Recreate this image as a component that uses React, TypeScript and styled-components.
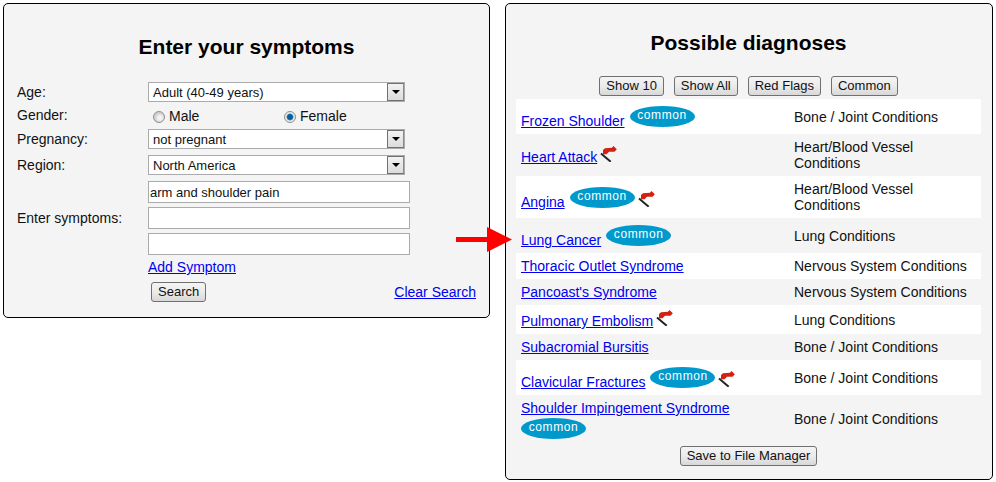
import React from 'react'
import styled, { createGlobalStyle } from 'styled-components'

const GlobalStyle = createGlobalStyle`
  html, body {
    margin: 0;
    background: #fff;
    color: #111;
    font-family: "Liberation Sans", Arial, sans-serif;
    font-size: 14px;
  }
`

const Page = styled.div`
  position: relative;
  width: 996px;
  height: 482px;
  box-sizing: border-box;
  padding: 3px;
  display: flex;
  align-items: flex-start;
  gap: 15px;
`

const Panel = styled.section<{ $width: number; $height: number }>`
  width: ${(p) => p.$width}px;
  height: ${(p) => p.$height}px;
  box-sizing: border-box;
  background: #f4f4f4;
  border: 1px solid #000;
  border-radius: 5px;
`

const SymptomPanel = styled(Panel)`
  padding: 31px 13px 0;
`

const DiagnosisPanel = styled(Panel)`
  padding: 27px 11px 0 10px;
`

const Title = styled.h1`
  margin: 0;
  font-size: 21px;
  line-height: 23px;
  font-weight: bold;
  text-align: center;
  color: #000;
`

const Form = styled.form`
  margin-top: 24px;
  display: grid;
  grid-template-columns: 131px 328px;
  row-gap: 6px;
  align-items: center;
`

const Label = styled.label`
  line-height: 15px;
`

const FakeSelect = styled.div`
  width: 257px;
  height: 20px;
  box-sizing: border-box;
  display: flex;
  align-items: center;
  justify-content: space-between;
  background: #fff;
  border: 1px solid #ababab;
  padding-left: 4px;
  font-size: 13px;
`

const SelectButton = styled.span`
  width: 17px;
  height: 18px;
  box-sizing: border-box;
  display: flex;
  align-items: center;
  justify-content: center;
  background: linear-gradient(#f2f2f2, #dcdcdc);
  border: 1px solid #707070;
  border-right-color: #8a8a8a;

  &::after {
    content: '';
    border-left: 4px solid transparent;
    border-right: 4px solid transparent;
    border-top: 4px solid #000;
  }
`

const RadioRow = styled.div`
  height: 15px;
  display: grid;
  grid-template-columns: 131px 1fr;
  padding-left: 5px;
  margin: 1px 0 -1px;
`

const RadioOption = styled.span`
  display: flex;
  align-items: center;
  gap: 4px;
  line-height: 15px;
`

const RadioDot = styled.span<{ $checked?: boolean }>`
  width: 12px;
  height: 12px;
  box-sizing: border-box;
  border-radius: 50%;
  border: 1px solid #8e8f8f;
  background: ${(p) =>
    p.$checked
      ? 'radial-gradient(circle, #0b5e9c 0 2.4px, #4a9ad0 3.2px, #e6e6e6 3.8px, #f4f4f4 100%)'
      : 'radial-gradient(circle at 60% 60%, #f2f2f2 0 2px, #d0d0d0 5px)'};
`

const SymptomInputs = styled.div`
  display: flex;
  flex-direction: column;
  gap: 4px;
`

const TextInput = styled.input`
  width: 262px;
  height: 22px;
  box-sizing: border-box;
  border: 1px solid #ababab;
  background: #fff;
  padding: 0 1px;
  font-family: inherit;
  font-size: 13px;
  color: #111;
  outline: none;
`

const FormLink = styled.a`
  color: #0000ee;
  text-decoration: underline;
  line-height: 16px;
`

const AddLink = styled(FormLink)`
  grid-column: 2;
  justify-self: start;
  margin-top: -2px;
`

const FormActions = styled.div`
  grid-column: 2;
  display: flex;
  align-items: center;
  justify-content: space-between;
  padding-left: 3px;
  margin-top: 1px;
`

const Button = styled.button`
  height: 20px;
  box-sizing: border-box;
  padding: 0 6px;
  border: 1px solid #707070;
  border-radius: 3px;
  background: linear-gradient(#f4f4f4 0, #ebebeb 50%, #d8d8d8 100%);
  font-family: inherit;
  font-size: 13px;
  line-height: 16px;
  color: #111;
`

const ButtonBar = styled.div`
  margin-top: 22px;
  margin-bottom: 3px;
  display: flex;
  justify-content: center;
  gap: 10px;
`

const SaveBar = styled.div`
  margin-top: 4px;
  display: flex;
  justify-content: center;
`

const Row = styled.div<{ $shaded: boolean }>`
  display: grid;
  grid-template-columns: 273px 1fr;
  align-items: center;
  padding: 5px 0 5px 5px;
  background: ${(p) => (p.$shaded ? '#f4f4f4' : '#fff')};
  line-height: 16px;
`

const NameCell = styled.div`
  width: 268px;
`

const Pill = styled.span`
  display: inline-block;
  width: 65px;
  height: 21px;
  margin: 2px 0 0 5px;
  border-radius: 50%;
  background: #0099cc;
  color: #fff;
  font-size: 12px;
  line-height: 19px;
  letter-spacing: 0.6px;
  text-align: center;
  vertical-align: 7px;
`

const WrappedPill = styled(Pill)`
  margin: 2px 0 -2px;
  vertical-align: -2px;
`

const FlagIcon = styled.svg`
  width: 19px;
  height: 16px;
  margin-left: 3px;
  vertical-align: 0;
`

const Arrow = styled.svg`
  position: absolute;
  left: 456px;
  top: 227px;
  width: 56px;
  height: 25px;
`

const Flag = () => (
  <FlagIcon viewBox="0 0 19 16">
    <path d="M1 7.5 L10.7 15.7" stroke="#222" strokeWidth="2" fill="none" />
    <path d="M3 4 L5 2.3 L12 1.8 L13.5 0 L16.8 3.2 L14.5 5.7 L9 5.7 L6.5 8.3 L3 8.3 Z" fill="#d3200f" />
  </FlagIcon>
)

type Diagnosis = {
  name: string
  category: string
  common?: boolean
  flag?: boolean
  wrap?: boolean
}

const diagnoses: Diagnosis[] = [
  { name: 'Frozen Shoulder', category: 'Bone / Joint Conditions', common: true },
  { name: 'Heart Attack', category: 'Heart/Blood Vessel Conditions', flag: true },
  { name: 'Angina', category: 'Heart/Blood Vessel Conditions', common: true, flag: true },
  { name: 'Lung Cancer', category: 'Lung Conditions', common: true },
  { name: 'Thoracic Outlet Syndrome', category: 'Nervous System Conditions' },
  { name: "Pancoast's Syndrome", category: 'Nervous System Conditions' },
  { name: 'Pulmonary Embolism', category: 'Lung Conditions', flag: true },
  { name: 'Subacromial Bursitis', category: 'Bone / Joint Conditions' },
  { name: 'Clavicular Fractures', category: 'Bone / Joint Conditions', common: true, flag: true },
  { name: 'Shoulder Impingement Syndrome', category: 'Bone / Joint Conditions', common: true, wrap: true },
]

const App = () => {
  return (
    <Page>
      <GlobalStyle />
      <SymptomPanel $width={487} $height={315}>
        <Title>Enter your symptoms</Title>
        <Form>
          <Label>Age:</Label>
          <FakeSelect>
            Adult (40-49 years)
            <SelectButton />
          </FakeSelect>
          <Label>Gender:</Label>
          <RadioRow>
            <RadioOption>
              <RadioDot />
              Male
            </RadioOption>
            <RadioOption>
              <RadioDot $checked />
              Female
            </RadioOption>
          </RadioRow>
          <Label>Pregnancy:</Label>
          <FakeSelect>
            not pregnant
            <SelectButton />
          </FakeSelect>
          <Label>Region:</Label>
          <FakeSelect>
            North America
            <SelectButton />
          </FakeSelect>
          <Label>Enter symptoms:</Label>
          <SymptomInputs>
            <TextInput defaultValue="arm and shoulder pain" />
            <TextInput />
            <TextInput />
          </SymptomInputs>
          <AddLink href="#">Add Symptom</AddLink>
          <FormActions>
            <Button type="button">Search</Button>
            <FormLink href="#">Clear Search</FormLink>
          </FormActions>
        </Form>
      </SymptomPanel>

      <DiagnosisPanel $width={488} $height={477}>
        <Title>Possible diagnoses</Title>
        <ButtonBar>
          <Button type="button">Show 10</Button>
          <Button type="button">Show All</Button>
          <Button type="button">Red Flags</Button>
          <Button type="button">Common</Button>
        </ButtonBar>
        {diagnoses.map((d, i) => (
          <Row key={d.name} $shaded={i % 2 === 1}>
            <NameCell>
              <FormLink href="#">{d.name}</FormLink>
              {d.common && (d.wrap ? <WrappedPill>common</WrappedPill> : <Pill>common</Pill>)}
              {d.flag && <Flag />}
            </NameCell>
            <div>{d.category}</div>
          </Row>
        ))}
        <SaveBar>
          <Button type="button">Save to File Manager</Button>
        </SaveBar>
      </DiagnosisPanel>

      <Arrow viewBox="0 0 56 25">
        <path d="M0 10 H31 V0 L56 12.5 L31 25 V15 H0 Z" fill="#ff0000" />
      </Arrow>
    </Page>
  )
}

export default App
